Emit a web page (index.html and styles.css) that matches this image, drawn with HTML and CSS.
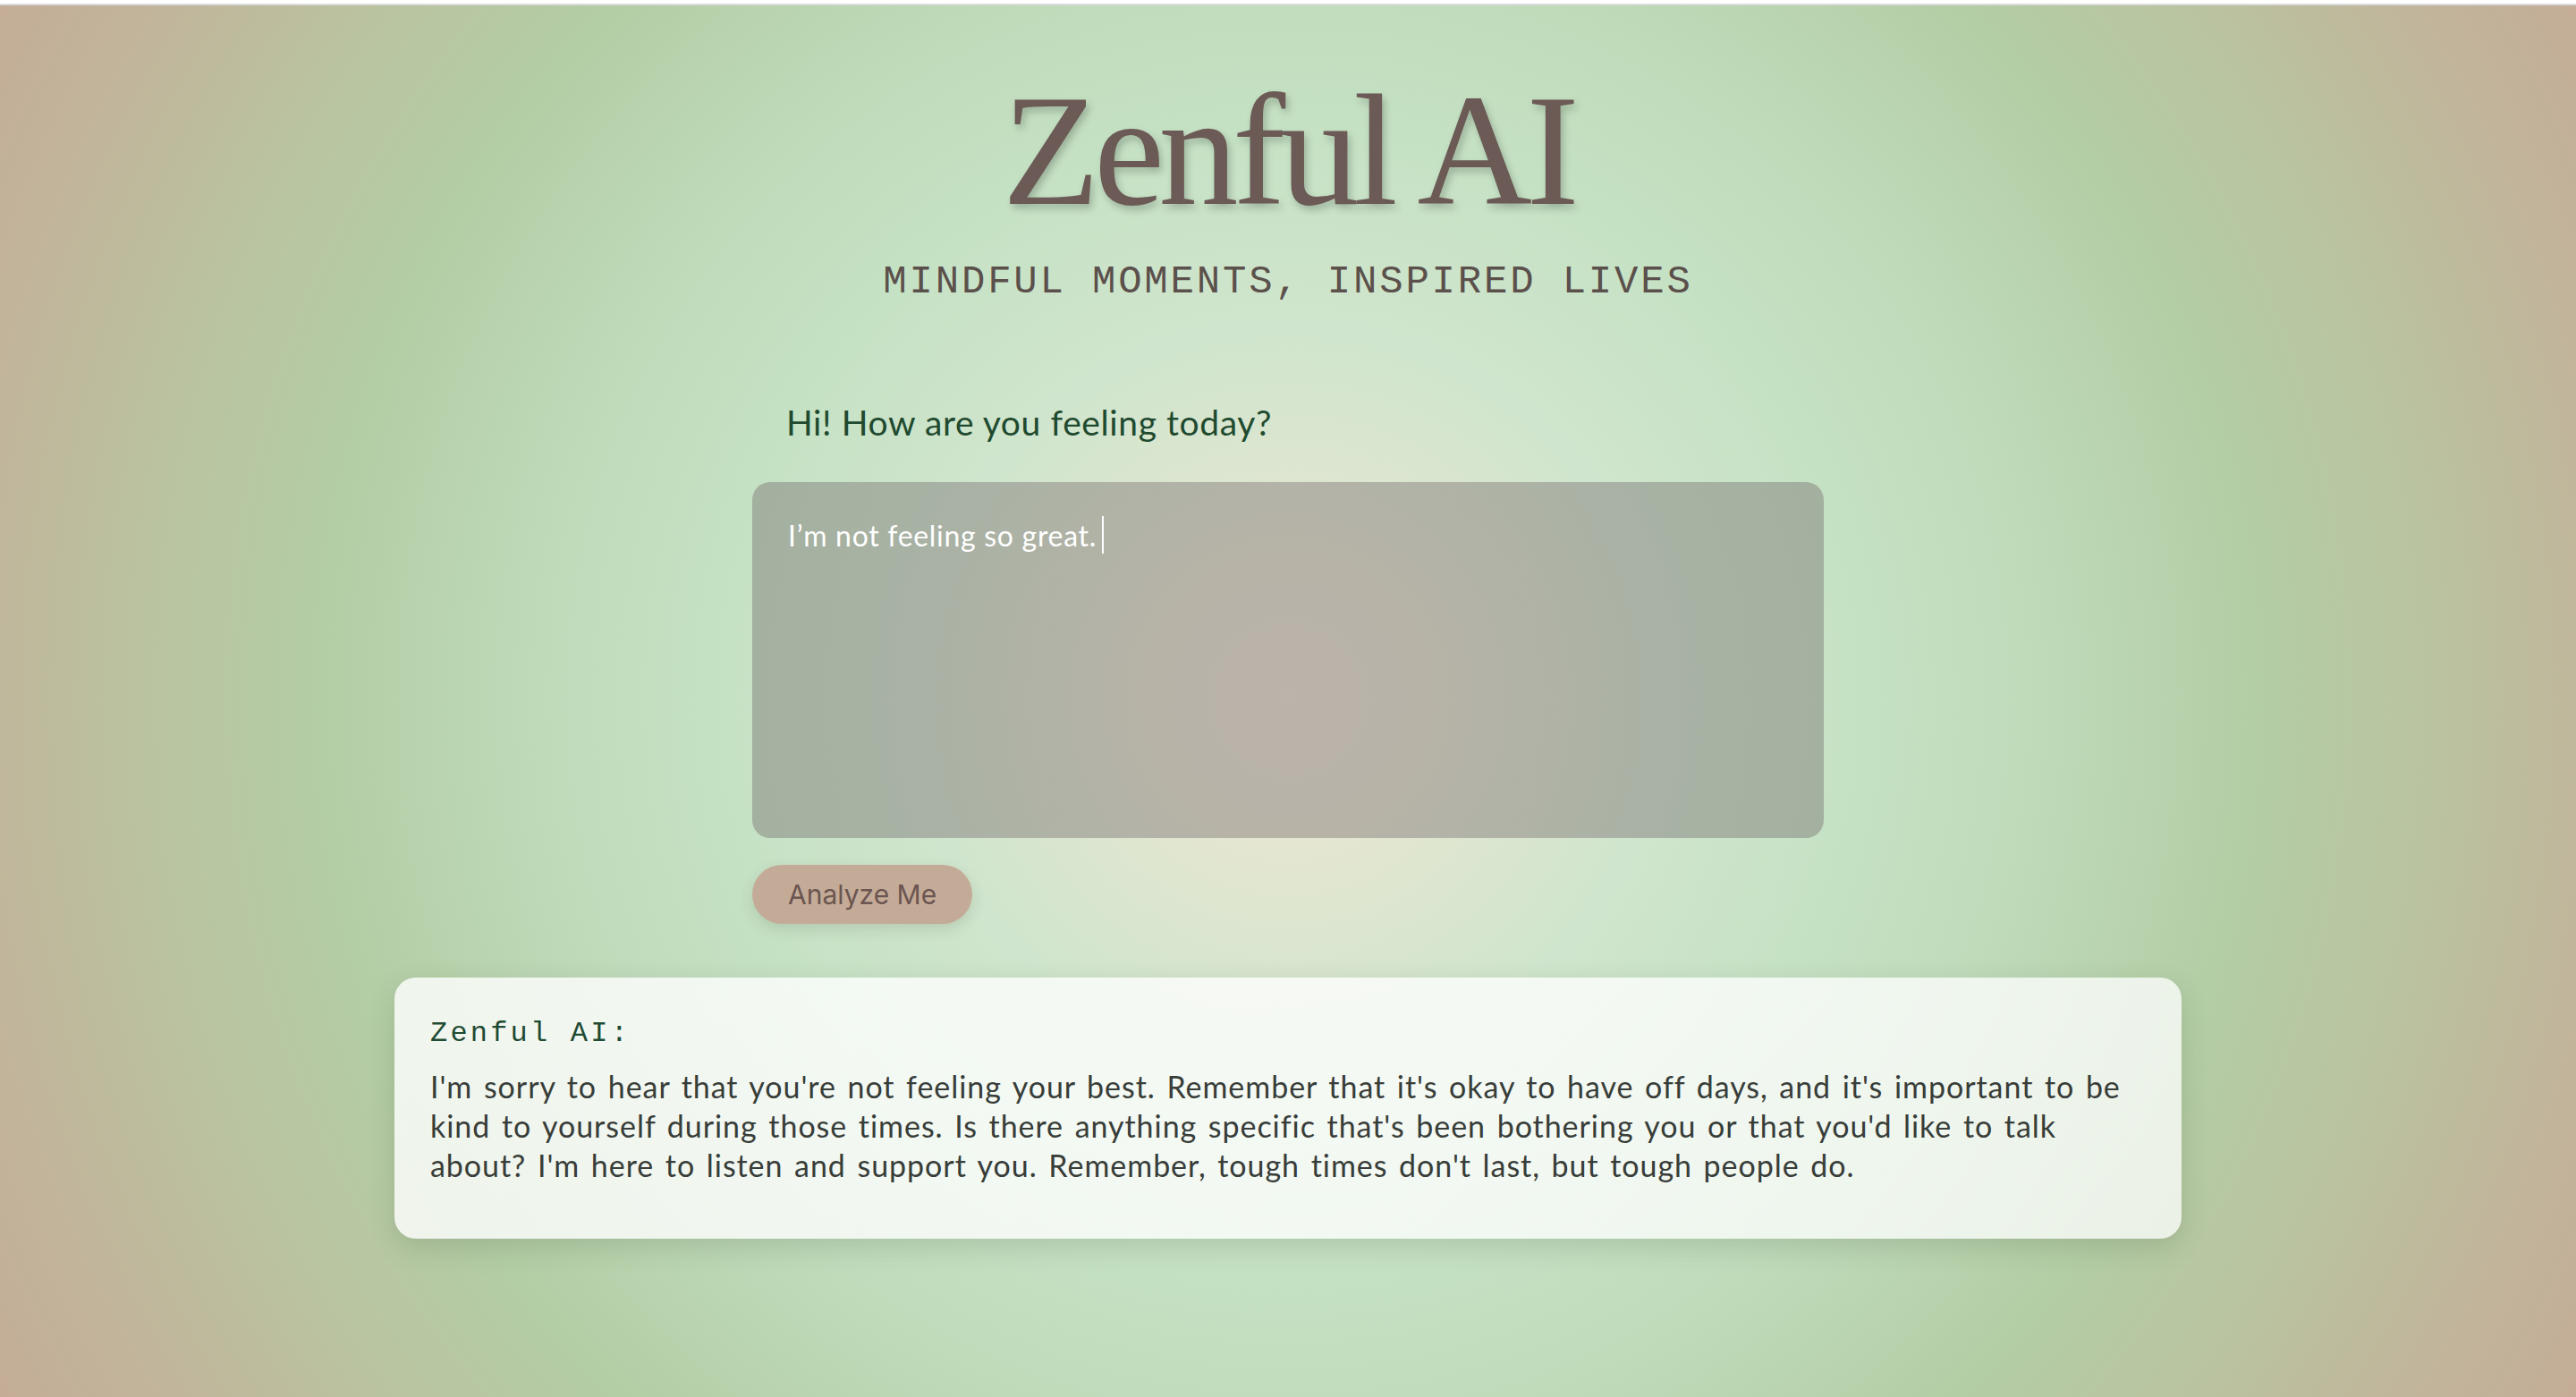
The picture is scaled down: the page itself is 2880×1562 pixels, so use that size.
FILE: index.html
```html
<!DOCTYPE html>
<html lang="en">
<head>
<meta charset="utf-8">
<title>Zenful AI</title>
<link rel="stylesheet" href="styles.css">
</head>
<body>
<div class="topbar"></div>
<main class="page">
  <header class="hero">
    <h1 class="title">Zenful AI</h1>
    <p class="tagline">MINDFUL MOMENTS, INSPIRED LIVES</p>
  </header>
  <section class="form">
    <label class="prompt">Hi! How are you feeling today?</label>
    <div class="input">I’m not feeling so great.<span class="caret"></span></div>
    <button class="analyze">Analyze Me</button>
  </section>
  <section class="reply">
    <h2 class="reply-label">Zenful AI:</h2>
    <p class="reply-text">I'm sorry to hear that you're not feeling your best. Remember that it's okay to have off days, and it's important to be kind to yourself during those times. Is there anything specific that's been bothering you or that you'd like to talk about? I'm here to listen and support you. Remember, tough times don't last, but tough people do.</p>
  </section>
</main>
</body>
</html>
```
FILE: styles.css
```css
html, body {
  margin: 0;
  padding: 0;
}
body {
  min-height: 100vh;
  background: radial-gradient(circle farthest-corner at 50% 50%,
    #ece7d5 0%, #e4e6d1 10%, #d0e5cd 25%, #c6e2c5 38%, #bfdbba 50%,
    #b3cda5 66%, #bac3a0 78%, #c1b59b 90%, #c4ad97 100%);
  font-family: "Lato", "Noto Sans", sans-serif;
}
.topbar {
  height: 4px;
  background: #ffffff;
  border-bottom: 2px solid #dcdcdc;
}
.page {
  display: flex;
  flex-direction: column;
  align-items: center;
}
.hero {
  display: flex;
  flex-direction: column;
  align-items: center;
  margin-top: 73px;
}
.title {
  margin: 0;
  font-family: "Liberation Serif", serif;
  font-weight: 400;
  font-size: 178px;
  line-height: 1;
  letter-spacing: -6.5px;
  color: #6b5a55;
  text-shadow: 3px 5px 8px rgba(0, 0, 0, 0.22);
}
.tagline {
  margin: 36px 0 0;
  font-family: "Liberation Mono", monospace;
  font-size: 44px;
  line-height: 1;
  letter-spacing: 2.8px;
  color: #5b504b;
}
.form {
  width: 1198px;
  display: flex;
  flex-direction: column;
  align-items: flex-start;
  margin-top: 116px;
}
.prompt {
  padding-left: 38px;
  font-size: 39px;
  line-height: 1;
  letter-spacing: 0.6px;
  color: #1f4a2f;
}
.input {
  box-sizing: border-box;
  align-self: stretch;
  height: 398px;
  margin-top: 47px;
  padding: 38px 40px;
  border-radius: 20px;
  background: rgba(103, 90, 94, 0.36);
  color: #ffffff;
  font-size: 32px;
  line-height: 1.4;
  letter-spacing: 0.7px;
}
.caret {
  display: inline-block;
  width: 2px;
  height: 42px;
  margin-left: 6px;
  vertical-align: -8px;
  background: #ffffff;
}
.analyze {
  margin-top: 30px;
  height: 66px;
  padding: 0 40px;
  border: none;
  border-radius: 33px;
  background: #c4ab97;
  color: #6b5550;
  font-family: "Inter", sans-serif;
  font-size: 30px;
  box-shadow: 0 6px 16px rgba(60, 60, 40, 0.14);
}
.reply {
  box-sizing: border-box;
  width: 1998px;
  margin-top: 60px;
  padding: 44px 40px 60px;
  border-radius: 24px;
  background: linear-gradient(135deg, rgba(255,255,255,0.8), rgba(255,255,255,0.74));
  box-shadow: 0 10px 30px rgba(70, 90, 60, 0.2);
}
.reply-label {
  margin: 0;
  font-family: "Liberation Mono", monospace;
  font-weight: 400;
  font-size: 32px;
  line-height: 1.2;
  letter-spacing: 3.2px;
  color: #1f4a33;
}
.reply-text {
  margin: 18px 0 0;
  font-size: 34px;
  line-height: 44px;
  letter-spacing: 0.95px;
  word-spacing: 3px;
  color: #383d39;
}
```
